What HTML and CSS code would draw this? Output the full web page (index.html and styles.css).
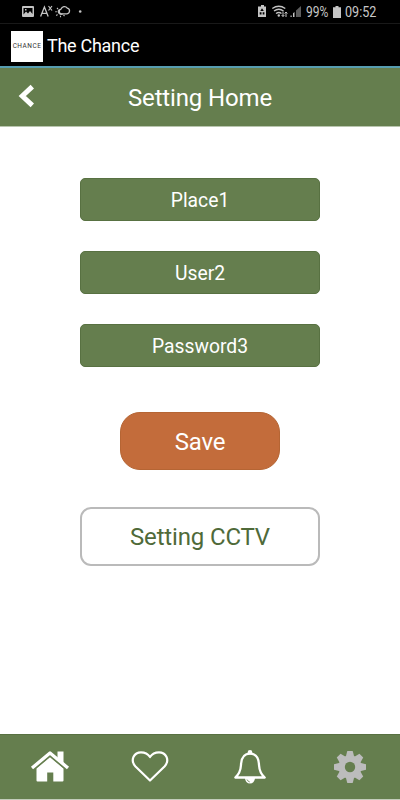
FILE: index.html
```html
<!DOCTYPE html>
<html lang="en">
<head>
<meta charset="utf-8">
<meta name="viewport" content="width=device-width, initial-scale=1">
<title>The Chance</title>
<link rel="stylesheet" href="styles.css">
</head>
<body>
<div class="screen">
  <div class="status">
    <svg class="status-left" width="64" height="14" viewBox="0 0 64 14" fill="none" stroke="#c4c4c4">
      <path fill="#c4c4c4" stroke="none" fill-rule="evenodd" d="M1 1h10q1 0 1 1v9q0 1-1 1H1q-1 0-1-1V2q0-1 1-1zM1.500 3v6.500l2.500-3 2 2 2-2.500 2.500 3V3zM3 4h1.500v1.500H3z"/>
      <path d="M18.600 11.500L22.400 2L26.200 11.500M20 8.300h4.800" stroke-width="1.300"/>
      <path d="M26.500 1l3.500 4.500M30 1l-3.500 4.500" stroke-width="1.200"/>
      <path d="M40.500 8.800h4.500a2.900 2.900 0 0 0 .3-5.700a3.600 3.600 0 0 0-6.300 1a2.400 2.400 0 0 0 1.500 4.700z" stroke-width="1.300"/>
      <path d="M37.500 4.500a2.300 2.300 0 1 0 3 4.300M34.800 6.800h-1.500M36 4l-1-1M35.500 9.500l-1.200 1.200M38.500 10.800v1.500M41.500 10l1 1" stroke-width="1.100"/>
      <circle cx="58.200" cy="6.500" r="1.300" fill="#c4c4c4" stroke="none"/>
    </svg>
    <div class="status-right">
      <svg width="44" height="14" viewBox="0 0 44 14" fill="none" stroke="#c4c4c4">
        <path fill="#c4c4c4" stroke="none" fill-rule="evenodd" d="M3 0h3v1.500h2V12H0V1.500h3zM4 3.300L2.300 6h3.500zM1.700 7.300v2.200h1.800V7.300zM4.700 7.300v2.200h1.700V7.300z"/>
        <path d="M14.300 3.500q6.500-4.500 13 0M16 6q4.800-3.500 9.500 0M18 8.500q2.900-2 5.500 0" stroke-width="1.400"/>
        <circle cx="20.800" cy="10.500" r="1.200" fill="#c4c4c4" stroke="none"/>
        <path d="M25 6.500v5M23.600 10l1.400 1.500 1.400-1.500M28 12V7M26.600 8.500L28 7l1.400 1.500"/>
        <path fill="#c4c4c4" stroke="none" d="M32.500 10.500h1.200V12h-1.200zM35 8.300l1.500-1.300v5H35z"/>
        <path fill="#5c5c5c" stroke="none" d="M38 5.500L43 1v11h-5z"/>
      </svg>
      <span class="percent">99%</span>
      <svg class="battery" width="8" height="12" viewBox="0 0 8 12"><path fill="#c4c4c4" d="M2.500 0h3v1.300H8V12H0V1.300h2.500z"/></svg>
      <span class="clock">09:52</span>
    </div>
  </div>
  <div class="appbar">
    <div class="logo"><span>CHANCE</span></div>
    <span class="app-name">The Chance</span>
  </div>
  <header class="header">
    <svg class="back" width="18" height="24" viewBox="0 0 18 24"><path d="M14.300 2.700L4.300 12l10 9.300" fill="none" stroke="#fff" stroke-width="5"/></svg>
    <h1>Setting Home</h1>
  </header>
  <main>
    <div class="field">Place1</div>
    <div class="field">User2</div>
    <div class="field">Password3</div>
    <button class="save">Save</button>
    <button class="cctv">Setting CCTV</button>
  </main>
  <nav>
    <a><svg width="40" height="36" viewBox="0 0 40 36">
      <path fill="#fff" d="M6.500 20.500L20 9.300l13.500 11.200V32.500q0 1-1 1H23.300V24.500h-6.100v9H7.500q-1 0-1-1z"/>
      <path d="M2 20.300L20 5L38 20.300" fill="none" stroke="#657e4e" stroke-width="5.500" stroke-linejoin="round"/>
      <path d="M2 20L20 5L38 20" fill="none" stroke="#fff" stroke-width="3.300" stroke-linejoin="round"/>
      <path fill="#fff" d="M27.500 3.500h6v13l-6-5z"/>
    </svg></a>
    <a><svg width="40" height="36" viewBox="0 0 40 36"><path d="M20 32.500L5.500 18.500C-.5 11.500 4.500 4.300 11 4.300c4 0 7 1.700 9 4.700c2-3 5-4.700 9-4.700c6.500 0 11.500 7.200 5.500 14.200z" fill="none" stroke="#fff" stroke-width="2.200" stroke-linejoin="round"/></svg></a>
    <a><svg width="40" height="36" viewBox="0 0 40 36">
      <path d="M5.300 29.500q5.200-4.500 5.700-12.500C11.300 9 15 5.700 20 5.700S28.700 9 29 17q.5 8 5.700 12.500z" fill="none" stroke="#fff" stroke-width="2.300" stroke-linejoin="round"/>
      <circle cx="20" cy="4.300" r="2.300" fill="#fff"/>
      <path fill="#fff" d="M15 30h10a5 5.500 0 0 1-10 0z"/>
      <path d="M17 31.500q.8 2 2.800 2.500" fill="none" stroke="#657e4e" stroke-width=".8"/>
    </svg></a>
    <a><svg width="40" height="36" viewBox="0 0 40 36">
      <g fill="#bcbcbc" transform="translate(20 19)">
        <path d="M-4.300-10L-2.700-16H2.700L4.300-10V10L2.700 16H-2.700L-4.300 10z"/>
        <path transform="rotate(45)" d="M-4.300-10L-2.700-16H2.700L4.300-10V10L2.700 16H-2.700L-4.300 10z"/>
        <path transform="rotate(90)" d="M-4.300-10L-2.700-16H2.700L4.300-10V10L2.700 16H-2.700L-4.300 10z"/>
        <path transform="rotate(135)" d="M-4.300-10L-2.700-16H2.700L4.300-10V10L2.700 16H-2.700L-4.300 10z"/>
        <circle r="11.500"/>
        <circle r="5.200" fill="#657e4e"/>
      </g>
    </svg></a>
  </nav>
</div>
</body>
</html>
```
FILE: styles.css
```css
* { box-sizing: border-box; }
body { margin: 0; font-family: Roboto, "Liberation Sans", sans-serif; background: #fff; }
.screen { width: 400px; height: 800px; display: flex; flex-direction: column; }
.status { height: 24px; background: #000; border-bottom: 1px solid #191919; display: flex; justify-content: space-between; padding: 5px 23px 0 22px; color: #c8c8c8; }
.status-right { display: flex; align-items: flex-start; }
.status-right span { font-size: 14px; line-height: 15px; white-space: nowrap; transform-origin: left; }
.percent { width: 23px; margin-left: 4px; transform: scaleX(.86); }
.battery { margin: 1px 4px 0 4px; }
.clock { width: 32px; transform: scaleX(.9); }
.appbar { height: 42px; background: #000; display: flex; align-items: center; padding: 2px 0 0 11px; gap: 4px; }
.logo { width: 32px; height: 31px; background: #fff; color: #333; display: flex; align-items: center; justify-content: center; }
.logo span { font-size: 6.5px; letter-spacing: .5px; line-height: 8px; }
.app-name { color: #fff; font-size: 18px; line-height: 24px; letter-spacing: -.28px; }
.header { height: 61px; background: #657e4e; border-top: 2px solid #579db0; border-bottom: 1px solid #b9c5ae; display: grid; grid-template-columns: 60px 1fr 60px; align-items: center; }
.back { margin-left: 18px; margin-top: -2px; }
h1 { margin: 2px 0 0; color: #fff; font-size: 24px; font-weight: 400; line-height: 30px; letter-spacing: -.14px; text-align: center; }
main { flex: 1; display: flex; flex-direction: column; align-items: center; padding-top: 51px; }
.field { width: 240px; height: 43px; margin-bottom: 30px; border: 1px solid #587142; border-radius: 5px; background: #657e4e; color: #fff; font-size: 19.3px; line-height: 43px; text-align: center; }
button { font-family: inherit; font-weight: 400; font-size: 24px; padding: 0; letter-spacing: -.16px; }
.save { width: 160px; height: 58px; margin-top: 15px; padding-top: 2px; border: 1px solid #b56534; border-radius: 20px; background: #c36c3b; color: #fff; }
.cctv { width: 240px; height: 59px; margin-top: 37px; padding-top: 1px; border: 2px solid #bababa; border-radius: 11px; background: #fff; color: #4f6a39; }
nav { height: 66px; background: #657e4e; border-top: 1px solid #587142; border-bottom: 1px solid #c3ccba; display: grid; grid-template-columns: repeat(4, 1fr); }
nav a { display: flex; justify-content: center; padding-top: 13px; }
```
